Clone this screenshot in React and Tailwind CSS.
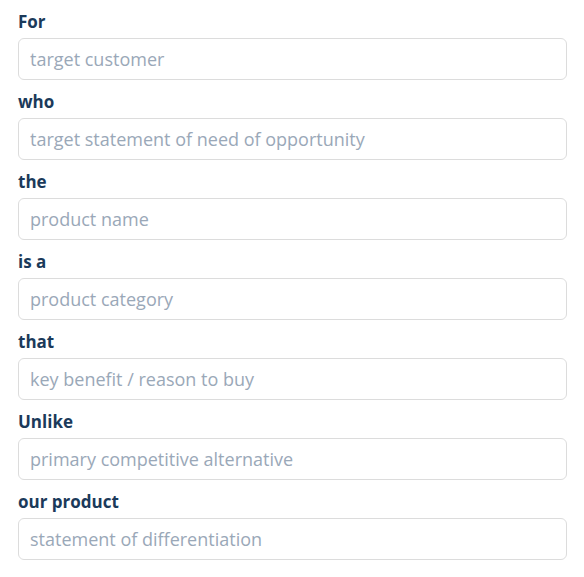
import React from 'react';

const fields = [
  { label: 'For', placeholder: 'target customer' },
  { label: 'who', placeholder: 'target statement of need of opportunity' },
  { label: 'the', placeholder: 'product name' },
  { label: 'is a', placeholder: 'product category' },
  { label: 'that', placeholder: 'key benefit / reason to buy' },
  { label: 'Unlike', placeholder: 'primary competitive alternative' },
  { label: 'our product', placeholder: 'statement of differentiation' },
];

const App = () => {
  return (
    <div className="min-h-screen bg-white px-[18px] pt-[10px] pr-[17px]" style={{ fontFamily: '"Open Sans", Lato, sans-serif' }}>
      {fields.map((f) => (
        <div key={f.label} className="mb-[10px]">
          <label className="block text-[17px] leading-[24px] font-bold text-[#1b3a5a] mb-[4px]">
            {f.label}
          </label>
          <input
            type="text"
            placeholder={f.placeholder}
            className="w-full h-[42px] px-[11px] text-[18px] border border-[#dcdcdc] rounded-[6px] bg-white placeholder:text-[#9aa8b8] focus:outline-none"
          />
        </div>
      ))}
    </div>
  );
};

export default App;
